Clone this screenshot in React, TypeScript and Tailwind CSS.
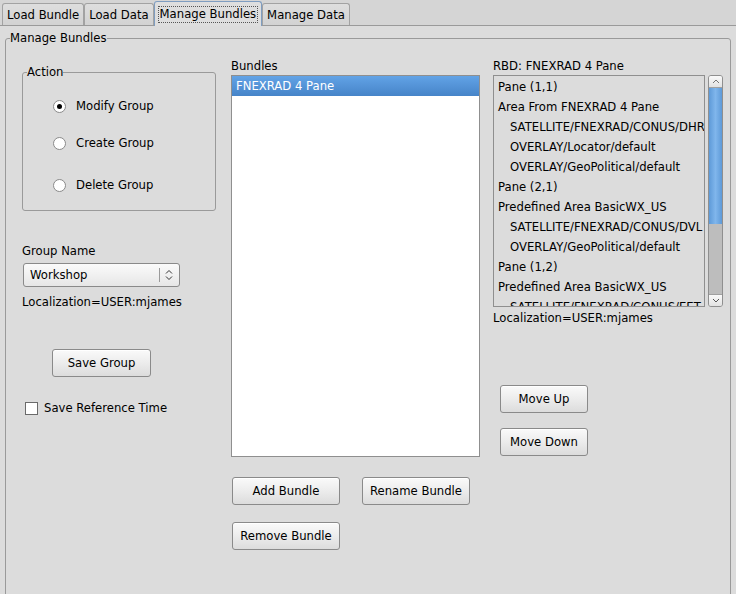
const tabs = ["Load Bundle", "Load Data", "Manage Bundles", "Manage Data"];

const treeRows = [
  { text: "Pane (1,1)", indent: false },
  { text: "Area From FNEXRAD 4 Pane", indent: false },
  { text: "SATELLITE/FNEXRAD/CONUS/DHR", indent: true },
  { text: "OVERLAY/Locator/default", indent: true },
  { text: "OVERLAY/GeoPolitical/default", indent: true },
  { text: "Pane (2,1)", indent: false },
  { text: "Predefined Area BasicWX_US", indent: false },
  { text: "SATELLITE/FNEXRAD/CONUS/DVL", indent: true },
  { text: "OVERLAY/GeoPolitical/default", indent: true },
  { text: "Pane (1,2)", indent: false },
  { text: "Predefined Area BasicWX_US", indent: false },
  { text: "SATELLITE/FNEXRAD/CONUS/EET", indent: true },
];

const Button = ({ label, className = "" }: { label: string; className?: string }) => (
  <div
    className={`flex h-[28px] items-center justify-center rounded-[3px] border border-[#8a8a8a] bg-gradient-to-b from-[#fafafa] via-[#ececec] to-[#dcdcdc] text-black shadow-[inset_0_1px_0_#fff] ${className}`}
  >
    {label}
  </div>
);

const Radio = ({ checked, label }: { checked?: boolean; label: string }) => (
  <div className="flex h-[18px] items-center">
    <div className="ml-[30px] flex h-[13px] w-[13px] items-center justify-center rounded-full border border-[#8a8a8a] bg-white">
      {checked && <div className="h-[5px] w-[5px] rounded-full bg-black" />}
    </div>
    <span className="ml-[10px]">{label}</span>
  </div>
);

const App = () => {
  return (
    <div className="h-[594px] w-[736px] overflow-hidden bg-[#dcdcdc] text-[11.65px] leading-[18px] text-black [font-family:'DejaVu_Sans',sans-serif]">
      {/* tab strip */}
      <div className="flex h-[26px] items-end border-b border-[#9a9a9a] bg-[#d5d5d5] pl-[2px]">
        {tabs.map((t) => {
          const active = t === "Manage Bundles";
          return active ? (
            <div
              key={t}
              className="relative -mb-px flex h-[25px] items-center justify-center whitespace-nowrap rounded-t-[3px] border border-b-0 border-[#7f9dc0] bg-[#dedede] px-[3px]"
            >
              <span className="border border-dotted border-[#555] px-[1px] leading-[15px]">{t}</span>
            </div>
          ) : (
            <div
              key={t}
              className="flex h-[22px] items-center whitespace-nowrap rounded-t-[3px] border border-b-0 border-[#a2a2a2] bg-gradient-to-b from-[#dedede] to-[#d2d2d2] px-[4px]"
            >
              {t}
            </div>
          );
        })}
      </div>

      {/* outer group */}
      <div className="px-[5px] pt-[12px]">
        <div className="relative h-[580px] rounded-[3px] border border-[#9a9a9a]">
          <span className="absolute -top-[8px] left-[4px] bg-[#dcdcdc] leading-[14px]">Manage Bundles</span>

          <div className="flex items-start pl-[16px]">
            {/* left column */}
            <div className="mt-[33px] w-[194px]">
              <div className="relative h-[139px] rounded-[3px] border border-[#9a9a9a]">
                <span className="absolute -top-[8px] left-[4px] bg-[#dcdcdc] leading-[14px]">Action</span>
                <div className="pt-[24px]">
                  <Radio checked label="Modify Group" />
                  <div className="h-[19px]" />
                  <Radio label="Create Group" />
                  <div className="h-[24px]" />
                  <Radio label="Delete Group" />
                </div>
              </div>

              <div className="mt-[33px] leading-[14px]">Group Name</div>
              <div className="ml-px mt-[5px] flex h-[24px] w-[157px] items-center rounded-[3px] border border-[#8a8a8a] bg-gradient-to-b from-[#fbfbfb] to-[#e6e6e6]">
                <span className="flex-1 pl-[6px]">Workshop</span>
                <div className="h-[14px] w-px bg-[#9a9a9a]" />
                <svg width="18" height="14" viewBox="0 0 18 14" className="mr-[1px]">
                  <path d="M6 5.5 L9 2.5 L12 5.5" fill="none" stroke="#333" strokeWidth="1" />
                  <path d="M6 8.5 L9 11.5 L12 8.5" fill="none" stroke="#333" strokeWidth="1" />
                </svg>
              </div>
              <div className="mt-[8px] leading-[14px]">Localization=USER:mjames</div>

              <Button label="Save Group" className="ml-[30px] mt-[40px] w-[99px]" />

              <div className="mt-[22px] flex items-center">
                <div className="ml-[3px] h-[13px] w-[13px] border border-[#6a6a6a] bg-white" />
                <span className="ml-[6px]">Save Reference Time</span>
              </div>
            </div>

            {/* middle column */}
            <div className="ml-[15px] mt-[18px] w-[249px]">
              <div>Bundles</div>
              <div className="h-[382px] border border-[#8f8f8f] bg-white">
                <div className="flex h-[20px] items-center bg-gradient-to-b from-[#62a3e6] to-[#4684c8] pl-[4px] text-white">
                  FNEXRAD 4 Pane
                </div>
              </div>
              <div className="mt-[20px] flex">
                <Button label="Add Bundle" className="ml-px w-[108px]" />
                <Button label="Rename Bundle" className="ml-[22px] w-[108px]" />
              </div>
              <Button label="Remove Bundle" className="ml-px mt-[17px] w-[108px]" />
            </div>

            {/* right column */}
            <div className="ml-[13px] mt-[18px] w-[230px]">
              <div>RBD: FNEXRAD 4 Pane</div>
              <div className="flex h-[232px]">
                <div className="h-full w-[212px] overflow-hidden border border-[#8f8f8f] bg-[#dcdcdc] pt-px">
                  {treeRows.map((r, i) => (
                    <div
                      key={i}
                      className={`flex h-[20px] items-center whitespace-nowrap ${r.indent ? "pl-[16px]" : "pl-[4px]"}`}
                    >
                      {r.text}
                    </div>
                  ))}
                </div>
                <div className="ml-[3px] flex h-full w-[15px] flex-col overflow-hidden rounded-[3px] border border-[#8f8f8f]">
                  <div className="flex h-[12px] items-center justify-center border-b border-[#a0a0a0] bg-gradient-to-b from-[#fafafa] to-[#e2e2e2]">
                    <svg width="8" height="5" viewBox="0 0 8 5">
                      <path d="M1 4 L4 1 L7 4" fill="none" stroke="#777" strokeWidth="1" />
                    </svg>
                  </div>
                  <div className="h-[136px] bg-gradient-to-r from-[#5e9ad8] via-[#80b6ec] to-[#5e9ad8]" />
                  <div className="flex-1 bg-[#bdbdbd]" />
                  <div className="flex h-[12px] items-center justify-center border-t border-[#a0a0a0] bg-gradient-to-b from-[#fafafa] to-[#e2e2e2]">
                    <svg width="8" height="5" viewBox="0 0 8 5">
                      <path d="M1 1 L4 4 L7 1" fill="none" stroke="#555" strokeWidth="1" />
                    </svg>
                  </div>
                </div>
              </div>
              <div className="mt-[4px] leading-[14px]">Localization=USER:mjames</div>

              <Button label="Move Up" className="ml-[7px] mt-[60px] w-[88px]" />
              <Button label="Move Down" className="ml-[7px] mt-[15px] w-[88px]" />
            </div>
          </div>
        </div>
      </div>
    </div>
  );
};

export default App;
